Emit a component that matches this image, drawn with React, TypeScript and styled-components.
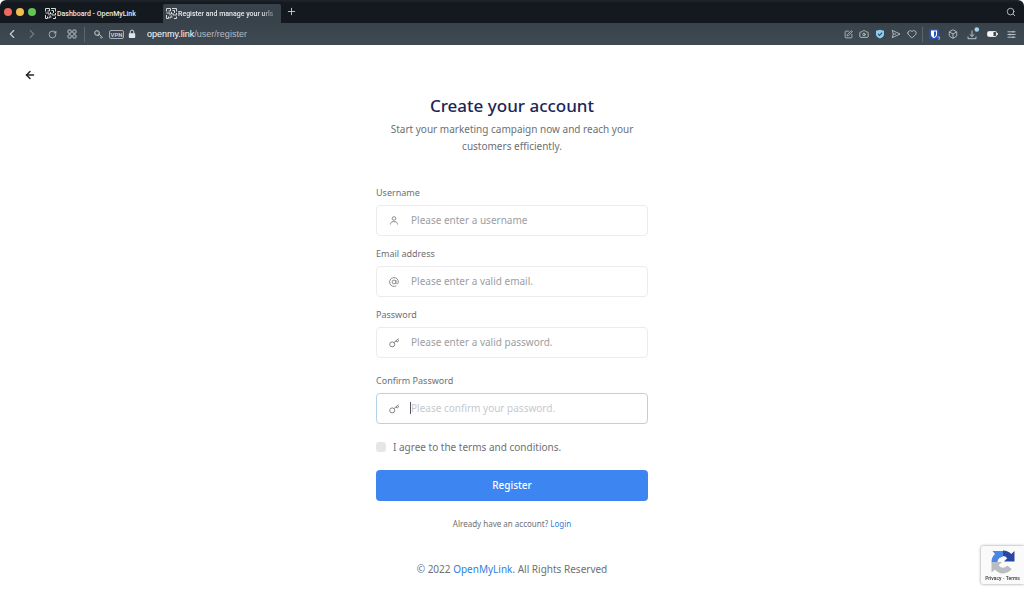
import React from 'react';
import styled, { createGlobalStyle, css } from 'styled-components';
import {
  ArrowLeft, Box, Camera, ChevronLeft, ChevronRight, Heart, Plus, RotateCw, Search, SquarePen,
} from 'lucide-react';

const GlobalStyle = createGlobalStyle`
  * { box-sizing: border-box; }
  body { margin: 0; background: #fff; font-family: "Noto Sans", sans-serif; color: #6d7075; }
  button, input { font-family: inherit; }
  a { color: #2f80e0; text-decoration: none; }
`;

const Chrome = styled.header`
  display: flex;
  flex-direction: column;
  border-radius: 6px 6px 0 0;
  overflow: hidden;
  color: #c9ced3;
`;

const TabStrip = styled.div`
  display: flex;
  align-items: center;
  height: 23px;
  padding-left: 4px;
  background: linear-gradient(#20252b 0, #14191f 3px);
`;

const Lights = styled.div`
  display: flex;
  gap: 4px;
  width: 40px;
`;

const Light = styled.button<{ $color: string }>`
  width: 8px;
  height: 8px;
  padding: 0;
  border: 0;
  border-radius: 50%;
  background: ${(p) => p.$color};
`;

const Tab = styled.button<{ $active?: boolean }>`
  display: flex;
  align-items: center;
  align-self: flex-end;
  gap: 1px;
  height: 19px;
  width: ${(p) => (p.$active ? 118 : 119)}px;
  padding: 0 6px 0 ${(p) => (p.$active ? 3 : 1)}px;
  border: 0;
  border-radius: 2px 2px 0 0;
  color: #e6e9eb;
  background: ${(p) => (p.$active ? '#38424b' : 'transparent')};
`;

const TabTitle = styled.span<{ $fade?: boolean }>`
  flex: 1;
  overflow: hidden;
  text-align: left;
  white-space: nowrap;
  font: 500 7px/12px Roboto, sans-serif;
  ${(p) => p.$fade && css`mask-image: linear-gradient(to right, #000 85%, transparent 105%);`}
`;

const BarButton = styled.button<{ $w: number }>`
  display: flex;
  align-items: center;
  justify-content: center;
  flex: none;
  width: ${(p) => p.$w}px;
  height: 20px;
  padding: 0;
  border: 0;
  color: inherit;
  background: none;
`;

const Spacer = styled.div`
  flex: 1;
`;

const Toolbar = styled.div`
  display: flex;
  align-items: center;
  height: 22px;
  padding: 0 4px 0 2px;
  background: linear-gradient(#38424b, #404a53);
`;

const Divider = styled.div`
  width: 1px;
  height: 15px;
  margin: 0 2px;
  background: #5c666f;
`;

const Vpn = styled.span`
  margin-right: 4px;
  width: 15px;
  border: 1px solid #a8aeb4;
  border-radius: 2px;
  text-align: center;
  font: 600 6px/7px Roboto, sans-serif;
`;

const Address = styled.div`
  margin-left: 11px;
  font: 400 9px/14px "Liberation Sans", sans-serif;
  color: #b5bbc1;

  b {
    font-weight: 400;
    color: #fff;
  }
`;

const Page = styled.main`
  padding: 24px;
`;

const Back = styled.a`
  display: flex;
  width: 12px;
  color: #22252a;
`;

const Panel = styled.section`
  display: flex;
  flex-direction: column;
  width: 272px;
  max-width: 100%;
  margin: 13px auto 0;
`;

const Title = styled.h1`
  margin: 0 0 3px;
  text-align: center;
  font-size: 17px;
  font-weight: 500;
  line-height: 24px;
  color: #1b2558;
`;

const Lead = styled.p`
  margin: 0 8px 31px;
  text-align: center;
  font-size: 10px;
  line-height: 17px;
`;

const Field = styled.div<{ $gap?: number }>`
  display: flex;
  flex-direction: column;
  gap: 5px;
  margin-bottom: ${(p) => p.$gap ?? 11}px;
`;

const Label = styled.label`
  font-size: 9px;
  line-height: 14px;
`;

const Control = styled.div<{ $active?: boolean }>`
  position: relative;
  display: flex;
  align-items: center;
  height: 31px;
  padding-left: 11px;
  border: 1px solid ${(p) => (p.$active ? '#b3d3e6' : '#ececee')};
  border-radius: 4px;
  color: #808387;
`;

const TextInput = styled.input<{ $active?: boolean }>`
  flex: 1;
  min-width: 0;
  height: 29px;
  margin-left: 11px;
  padding: 0 0 2px;
  border: 0;
  outline: 0;
  background: none;
  font-size: 10px;

  &::placeholder {
    color: ${(p) => (p.$active ? '#c6c9cd' : '#9b9ea2')};
    opacity: 1;
  }
`;

const Caret = styled.span`
  position: absolute;
  left: 33px;
  top: 8px;
  width: 1px;
  height: 12px;
  background: #55585c;
`;

const Agree = styled.label`
  display: flex;
  align-items: center;
  gap: 7px;
  font-size: 10px;
  line-height: 14px;
`;

const Check = styled.input`
  appearance: none;
  width: 10px;
  height: 10px;
  margin: 0;
  border-radius: 3px;
  background: #e6e6e7;
`;

const Submit = styled.button`
  height: 31px;
  margin: 16px 0;
  padding: 0 0 2px;
  border: 0;
  border-radius: 4px;
  color: #fff;
  background: #3d86f2;
  font-size: 10px;
  font-weight: 500;
`;

const Hint = styled.p`
  margin: 0;
  text-align: center;
  font-size: 8px;
  line-height: 14px;
`;

const Footer = styled.footer`
  margin-top: 30px;
  text-align: center;
  font-size: 10px;
  line-height: 16px;
`;

const Captcha = styled.aside`
  position: fixed;
  right: 0;
  bottom: 8px;
  display: flex;
  flex-direction: column;
  align-items: center;
  width: 43px;
  height: 38px;
  padding-top: 3px;
  border-radius: 2px 0 0 2px;
  background: #fafafa;
  box-shadow: 0 0 3px #8c8c8c;
  white-space: nowrap;
  font: 500 5px/6px Roboto, sans-serif;

  a { color: #33363a; }
`;

const SiteMark = () => (
  <svg width="11" height="11" viewBox="0 0 11 11" fill="none" stroke="#d5dadd" strokeWidth="1" aria-hidden="true">
    <path d="M.5 3.500V.5H4.500V3H2.500M6 .5h4.500v3M6.500 2.500h2V5M.5 5h3.500v2.500M5.500 4v2H8V8M10.500 5v2H9M.5 7v3.500h2V8.500M4 10.500V9h2.500M8 10.500h2.500V8.500M5 8H6" />
  </svg>
);

const Keyhole = () => (
  <svg width="9" height="9" viewBox="0 0 9 9" fill="none" stroke="currentColor" aria-hidden="true">
    <circle cx="3" cy="3" r="2.300" />
    <path d="M4.800 4 8.400 7.200 7.300 8.300 6.200 7.300M4.800 6.200 4 5" strokeWidth=".9" />
  </svg>
);

const LockIcon = () => (
  <svg width="8" height="10" viewBox="0 0 8 10" aria-hidden="true">
    <path d="M2.200 5V2.900a1.800 1.800 0 0 1 3.600 0V5" fill="none" stroke="#d6dadd" />
    <rect x=".8" y="4.300" width="6.400" height="4.700" rx=".8" fill="#e3e6e8" />
  </svg>
);

const GridIcon = () => (
  <svg width="10" height="10" viewBox="0 0 10 10" fill="none" stroke="currentColor" strokeWidth=".9" aria-hidden="true">
    <rect x="1" y="1" width="3.200" height="3.200" rx=".7" />
    <rect x="5.800" y="1" width="3.200" height="3.200" rx=".7" />
    <rect x="1" y="5.800" width="3.200" height="3.200" rx=".7" />
    <rect x="5.800" y="5.800" width="3.200" height="3.200" rx=".7" />
  </svg>
);

const ShieldIcon = () => (
  <svg width="10" height="10" viewBox="0 0 10 10" aria-hidden="true">
    <path d="M5 .7 9 1.700v3.600C9 7.500 7 8.800 5 9.600 3 8.800 1 7.500 1 5.300V1.700z" fill="#8fcdf0" />
    <path d="m3 4.900 1.500 1.500L7.200 3.600" fill="none" stroke="#2b4d69" strokeWidth="1.100" />
  </svg>
);

const SendIcon = () => (
  <svg width="10" height="10" viewBox="0 0 10 10" fill="none" stroke="currentColor" strokeWidth=".8" aria-hidden="true">
    <path d="M1.200 1.300 9 5 1.200 8.700 2.300 5zM2.300 5H5" />
  </svg>
);

const VaultIcon = () => (
  <svg width="13" height="13" viewBox="0 0 13 13" aria-hidden="true">
    <rect x="1" y="1" width="10" height="10" rx="1.500" fill="#2951b8" />
    <path d="M3 2.500h6v4C9 8.400 7.500 9.400 6 10.200 4.500 9.400 3 8.400 3 6.500z" fill="#fff" />
    <path d="M6 3.500h2v3C8 7.600 7 8.300 6 9z" fill="#2951b8" />
    <path d="M9.500 9h2.300l-1 3" fill="none" stroke="#aebdd8" strokeWidth=".9" />
  </svg>
);

const DownloadIcon = () => (
  <svg width="16" height="16" viewBox="0 0 16 16" fill="none" stroke="currentColor" aria-hidden="true">
    <path d="M8 4.500v6M5.700 8.300 8 10.500l2.300-2.200M4 10.500v2.200h8v-2.200" strokeWidth=".9" />
    <circle cx="12.800" cy="3.500" r="2.300" fill="#a5d5ee" stroke="none" />
  </svg>
);

const BatteryIcon = () => (
  <svg width="11" height="6" viewBox="0 0 11 6" aria-hidden="true">
    <rect x=".5" y=".5" width="9" height="5" rx="1.300" fill="none" stroke="#dfe3e6" />
    <path d="M1 1h5.500v4H1z" fill="#f2f4f5" />
    <path d="M10.400 2v2" stroke="#dfe3e6" />
  </svg>
);

const SettingsIcon = () => (
  <svg width="9" height="9" viewBox="0 0 9 9" stroke="currentColor" strokeWidth=".9" aria-hidden="true">
    <path d="M.5 1.800h8M.5 4.500h8M.5 7.200h8M6 .9v1.800M3 3.600v1.800M6 6.300v1.800" />
  </svg>
);

const UserIcon = () => (
  <svg width="12" height="12" viewBox="0 0 12 12" fill="none" stroke="currentColor" strokeWidth=".9" aria-hidden="true">
    <circle cx="6" cy="3.500" r="1.800" />
    <path d="M2.500 9.500c0-1.800 1-2.800 2.500-2.800h2c1.500 0 2.500 1 2.500 2.800" />
  </svg>
);

const AtIcon = () => (
  <svg width="12" height="12" viewBox="0 0 12 12" fill="none" stroke="currentColor" strokeWidth=".9" aria-hidden="true">
    <circle cx="6" cy="6" r="1.900" />
    <path d="M7.900 4v2.700c0 1.700 2.500 1.500 2.500-.7A4.400 4.400 0 1 0 8.300 9.800" />
  </svg>
);

const KeyIcon = () => (
  <svg width="12" height="12" viewBox="0 0 12 12" fill="none" stroke="currentColor" aria-hidden="true">
    <circle cx="4.200" cy="7.400" r="2.500" />
    <path d="m6 5.600 4.600-4M8 3.900l1.100 1.200 1.600-1.300-1-1.300" />
  </svg>
);

const CaptchaMark = () => (
  <svg width="26" height="26" viewBox="0 0 26 26" aria-hidden="true">
    <path d="M24.500 2v10.500H14l3.200-3.200C16 7.700 14.700 7 13 7V1.500c3.300 0 6.200 1.300 8.300 3.600z" fill="#2747a3" />
    <path d="M2.500 2H13v5.500L9.500 9c-1.200 1-1.800 2.300-2 4H1.500c0-3.200 1.200-6 3.500-8z" fill="#4a87e5" />
    <path d="M1.500 13H12l-3.300 3.300c2 3.200 6 3.300 8.500.2l4.500 3.600c-4.700 6-12.700 5.500-16.700.4l-3.500 3z" fill="#b9bcc0" />
  </svg>
);

type FormFieldProps = {
  id: string;
  label: string;
  placeholder: string;
  icon: React.ReactNode;
  type?: string;
  gap?: number;
  active?: boolean;
};

const FormField = ({ id, label, placeholder, icon, type = 'text', gap, active }: FormFieldProps) => (
  <Field $gap={gap}>
    <Label htmlFor={id}>{label}</Label>
    <Control $active={active}>
      {icon}
      <TextInput id={id} type={type} placeholder={placeholder} $active={active} />
      {active && <Caret />}
    </Control>
  </Field>
);

export default function App() {
  return (
    <>
      <GlobalStyle />
      <Chrome>
        <TabStrip>
          <Lights>
            <Light $color="#ed6a5e" aria-label="Close" />
            <Light $color="#f0bd4f" aria-label="Minimise" />
            <Light $color="#61c454" aria-label="Zoom" />
          </Lights>
          <Tab><SiteMark /><TabTitle>Dashboard - OpenMyLink</TabTitle></Tab>
          <Tab $active><SiteMark /><TabTitle $fade>Register and manage your urls</TabTitle></Tab>
          <BarButton $w={20} aria-label="New tab"><Plus size={11} strokeWidth={2} /></BarButton>
          <Spacer />
          <BarButton $w={26} aria-label="Search tabs"><Search size={10} strokeWidth={2} /></BarButton>
        </TabStrip>
        <Toolbar>
          <BarButton $w={20} aria-label="Back"><ChevronLeft size={14} strokeWidth={2} /></BarButton>
          <BarButton $w={20} aria-label="Forward"><ChevronRight size={14} strokeWidth={2} color="#707a83" /></BarButton>
          <BarButton $w={20} aria-label="Reload"><RotateCw size={9} strokeWidth={2} /></BarButton>
          <BarButton $w={20} aria-label="Speed dial"><GridIcon /></BarButton>
          <Divider />
          <BarButton $w={22} aria-label="Site access"><Keyhole /></BarButton>
          <Vpn>VPN</Vpn>
          <LockIcon />
          <Address><b>openmy.link</b>/user/register</Address>
          <Spacer />
          <BarButton $w={16} aria-label="Edit page"><SquarePen size={9} strokeWidth={2} /></BarButton>
          <BarButton $w={16} aria-label="Snapshot"><Camera size={10} strokeWidth={2} /></BarButton>
          <BarButton $w={16} aria-label="Protection"><ShieldIcon /></BarButton>
          <BarButton $w={16} aria-label="Send"><SendIcon /></BarButton>
          <BarButton $w={16} aria-label="Favourite"><Heart size={10} strokeWidth={2} /></BarButton>
          <Divider />
          <BarButton $w={19} aria-label="Vault"><VaultIcon /></BarButton>
          <BarButton $w={18} aria-label="Extensions"><Box size={10} strokeWidth={2} /></BarButton>
          <BarButton $w={20} aria-label="Downloads"><DownloadIcon /></BarButton>
          <BarButton $w={20} aria-label="Battery"><BatteryIcon /></BarButton>
          <BarButton $w={18} aria-label="Settings"><SettingsIcon /></BarButton>
        </Toolbar>
      </Chrome>
      <Page>
        <Back href="#" aria-label="Go back"><ArrowLeft size={12} strokeWidth={3} /></Back>
        <Panel>
          <Title>Create your account</Title>
          <Lead>Start your marketing campaign now and reach your customers efficiently.</Lead>
          <FormField id="username" label="Username" placeholder="Please enter a username" icon={<UserIcon />} />
          <FormField id="email" type="email" label="Email address" placeholder="Please enter a valid email." icon={<AtIcon />} />
          <FormField id="password" type="password" label="Password" placeholder="Please enter a valid password." icon={<KeyIcon />} gap={16} />
          <FormField id="confirm" type="password" label="Confirm Password" placeholder="Please confirm your password." icon={<KeyIcon />} gap={16} active />
          <Agree><Check type="checkbox" />I agree to the terms and conditions.</Agree>
          <Submit type="submit">Register</Submit>
          <Hint>Already have an account? <a href="#">Login</a></Hint>
          <Footer>© 2022 <a href="#">OpenMyLink</a>. All Rights Reserved</Footer>
        </Panel>
      </Page>
      <Captcha>
        <CaptchaMark />
        <span><a href="#">Privacy</a> - <a href="#">Terms</a></span>
      </Captcha>
    </>
  );
}
